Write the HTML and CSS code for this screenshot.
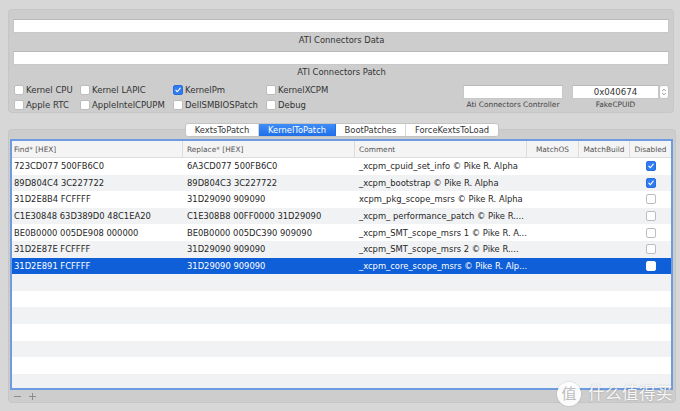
FILE: index.html
```html
<!DOCTYPE html>
<html>
<head>
<meta charset="utf-8">
<link rel="stylesheet" href="styles.css">
</head>
<body>
<div class="window">
  <div class="group">
    <div class="field wide"></div>
    <div class="caption">ATI Connectors Data</div>
    <div class="field wide"></div>
    <div class="caption">ATI Connectors Patch</div>
    <div class="bottom">
      <div class="checks">
        <label class="chk"><span class="box"></span>Kernel CPU</label>
        <label class="chk"><span class="box"></span>Kernel LAPIC</label>
        <label class="chk"><span class="box on"><svg viewBox="0 0 10 10"><path d="M2.3 5.2 L4.2 7.2 L7.8 2.6" fill="none" stroke="#fff" stroke-width="1.4" stroke-linecap="round" stroke-linejoin="round"/></svg></span>KernelPm</label>
        <label class="chk"><span class="box"></span>KernelXCPM</label>
        <label class="chk"><span class="box"></span>Apple RTC</label>
        <label class="chk"><span class="box"></span>AppleIntelCPUPM</label>
        <label class="chk"><span class="box"></span>DellSMBIOSPatch</label>
        <label class="chk"><span class="box"></span>Debug</label>
      </div>
      <div class="rfields">
        <div class="rf">
          <div class="field ctrl"></div>
          <div class="smallcap">Ati Connectors Controller</div>
        </div>
        <div class="rf">
          <div class="spinrow">
            <div class="field cpuid">0x040674</div>
            <div class="stepper"><svg viewBox="0 0 10 14"><path d="M3 5.5 L5 3.5 L7 5.5 M3 8.5 L5 10.5 L7 8.5" fill="none" stroke="#777" stroke-width="0.9" stroke-linecap="round" stroke-linejoin="round"/></svg></div>
          </div>
          <div class="smallcap cpucap">FakeCPUID</div>
        </div>
      </div>
    </div>
  </div>

  <div class="tabs">
    <div class="tab">KextsToPatch</div>
    <div class="tab active">KernelToPatch</div>
    <div class="tab">BootPatches</div>
    <div class="tab">ForceKextsToLoad</div>
  </div>
  <div class="tabbox">
    <div class="table">
      <div class="row head">
        <div class="c">Find* [HEX]</div>
        <div class="c">Replace* [HEX]</div>
        <div class="c">Comment</div>
        <div class="c ctr">MatchOS</div>
        <div class="c ctr">MatchBuild</div>
        <div class="c ctr">Disabled</div>
      </div>
      <div class="row">
        <div class="c first">723CD077 500FB6C0</div><div class="c">6A3CD077 500FB6C0</div><div class="c">_xcpm_cpuid_set_info © Pike R. Alpha</div><div class="c"></div><div class="c"></div>
        <div class="c ctr"><span class="box on"><svg viewBox="0 0 10 10"><path d="M2.3 5.2 L4.2 7.2 L7.8 2.6" fill="none" stroke="#fff" stroke-width="1.4" stroke-linecap="round" stroke-linejoin="round"/></svg></span></div>
      </div>
      <div class="row alt">
        <div class="c first">89D804C4 3C227722</div><div class="c">89D804C3 3C227722</div><div class="c">_xcpm_bootstrap © Pike R. Alpha</div><div class="c"></div><div class="c"></div>
        <div class="c ctr"><span class="box on"><svg viewBox="0 0 10 10"><path d="M2.3 5.2 L4.2 7.2 L7.8 2.6" fill="none" stroke="#fff" stroke-width="1.4" stroke-linecap="round" stroke-linejoin="round"/></svg></span></div>
      </div>
      <div class="row">
        <div class="c first">31D2E8B4 FCFFFF</div><div class="c">31D29090 909090</div><div class="c">xcpm_pkg_scope_msrs © Pike R. Alpha</div><div class="c"></div><div class="c"></div>
        <div class="c ctr"><span class="box"></span></div>
      </div>
      <div class="row alt">
        <div class="c first">C1E30848 63D389D0 48C1EA20</div><div class="c">C1E308B8 00FF0000 31D29090</div><div class="c">_xcpm_ performance_patch © Pike R....</div><div class="c"></div><div class="c"></div>
        <div class="c ctr"><span class="box"></span></div>
      </div>
      <div class="row">
        <div class="c first">BE0B0000 005DE908 000000</div><div class="c">BE0B0000 005DC390 909090</div><div class="c">_xcpm_SMT_scope_msrs 1 © Pike R. A...</div><div class="c"></div><div class="c"></div>
        <div class="c ctr"><span class="box"></span></div>
      </div>
      <div class="row alt">
        <div class="c first">31D2E87E FCFFFF</div><div class="c">31D29090 909090</div><div class="c">_xcpm_SMT_scope_msrs 2 © Pike R....</div><div class="c"></div><div class="c"></div>
        <div class="c ctr"><span class="box"></span></div>
      </div>
      <div class="row sel">
        <div class="c first">31D2E891 FCFFFF</div><div class="c">31D29090 909090</div><div class="c">_xcpm_core_scope_msrs © Pike R. Alp...</div><div class="c"></div><div class="c"></div>
        <div class="c ctr"><span class="box"></span></div>
      </div>
      <div class="row alt"></div>
      <div class="row"></div>
      <div class="row alt"></div>
      <div class="row"></div>
      <div class="row alt"></div>
      <div class="row"></div>
      <div class="row alt"></div>
    </div>
    <div class="pm"><span class="minus"></span><span class="plus"></span></div>
  </div>
  <div class="watermark"><span class="wm-circle">值</span><span class="wm-text">什么值得买</span></div>
</div>
</body>
</html>
```

FILE: styles.css
```css
html, body {
  margin: 0;
  padding: 0;
  background: #d7d7d7;
}
body {
  font-family: "DejaVu Sans", "Noto Sans CJK SC", sans-serif;
  color: #333;
  width: 680px;
  height: 411px;
  overflow: hidden;
}
.window {
  position: relative;
  padding: 9px 0 0 8px;
  height: 402px;
}
.group {
  width: 657px;
  height: 93px;
  background: #cdcdcd;
  border: 1px solid #c6c6c6;
  border-radius: 4px;
  padding: 9px 3px 0 4px;
}
.field {
  background: #fff;
  border: 1px solid #c8c8c8;
  border-top-color: #b9b9b9;
  box-sizing: border-box;
  height: 14px;
}
.field.wide {
  width: 656px;
}
.caption {
  height: 18px;
  box-sizing: border-box;
  padding-top: 1px;
  line-height: 13px;
  text-align: center;
  font-size: 8.4px;
  color: #333;
}
.bottom {
  display: flex;
  margin-top: -4px;
}
.checks {
  display: grid;
  grid-template-columns: 66px 93px 93px 93px;
  grid-auto-rows: 15px;
  padding-top: 3px;
  margin-left: 1px;
}
.chk {
  display: flex;
  align-items: center;
  font-size: 8.5px;
  color: #333;
  white-space: nowrap;
}
.box {
  display: inline-block;
  width: 10px;
  height: 10px;
  box-sizing: border-box;
  background: #fff;
  border: 1px solid #bdbdbd;
  border-radius: 2px;
  margin-right: 2px;
  flex: none;
  vertical-align: middle;
}
.box.on {
  background: #2f7bf2;
  border-color: #2a6fde;
}
.box svg {
  display: block;
  width: 8px;
  height: 8px;
}
.rfields {
  display: flex;
  margin-left: auto;
  gap: 9px;
  padding-top: 6px;
  padding-right: 1px;
}
.rf {
  display: flex;
  flex-direction: column;
}
.field.ctrl {
  width: 100px;
}
.spinrow {
  display: flex;
}
.field.cpuid {
  width: 87px;
  font-size: 8.6px;
  line-height: 12px;
  text-align: center;
  color: #333;
}
.stepper {
  width: 10px;
  height: 14px;
  box-sizing: border-box;
  background: #fff;
  border: 1px solid #c4c4c4;
  border-radius: 3px;
}
.stepper svg {
  display: block;
  width: 8px;
  height: 12px;
}
.smallcap {
  font-size: 7.4px;
  color: #444;
  text-align: center;
  line-height: 12px;
}
.cpucap {
  margin-right: 10px;
}
.tabs {
  display: flex;
  margin: 10px 0 -8px 177px;
  position: relative;
  z-index: 1;
  height: 12px;
  width: 312px;
  background: #fff;
  border: 1px solid #c3c3c3;
  border-radius: 3px;
  overflow: hidden;
}
.tab {
  font-size: 8.4px;
  line-height: 12px;
  color: #333;
  text-align: center;
  border-right: 1px solid #d6d6d6;
}
.tab:nth-child(1) { width: 72px; }
.tab:nth-child(2) { width: 76px; }
.tab:nth-child(3) { width: 69px; }
.tab:nth-child(4) { width: 92px; border-right: none; }
.tab.active {
  background: linear-gradient(#3f8df7, #1f6fe8);
  color: #fff;
  border-right-color: #1f6fe8;
}
.tabbox {
  width: 665px;
  height: 263px;
  background: #cdcdcd;
  border: 1px solid #c6c6c6;
  border-radius: 4px;
  padding: 9px 0 0 1px;
}
.table {
  width: 659px;
  height: 247px;
  border: 2px solid #6e9be2;
  background: #fff;
  overflow: hidden;
}
.row {
  display: grid;
  grid-template-columns: 171px 172px 172px 52px 51px 41px;
  height: 16.6px;
  font-size: 8.4px;
  color: #262626;
  background: #fff;
}
.row.alt {
  background: #f1f2f4;
}
.row.head {
  height: 17px;
  background: #f4f4f4;
  border-bottom: 1px solid #dedede;
  box-sizing: border-box;
  color: #555;
  font-size: 7.4px;
}
.row.head .c {
  border-right: 1px solid #dcdcdc;
  padding-left: 4px;
}
.row.head .c:first-child {
  padding-left: 2px;
}
.row.head .c:last-child {
  border-right: none;
}
.c {
  display: flex;
  align-items: center;
  padding-left: 4px;
  white-space: nowrap;
  overflow: hidden;
}
.c.first {
  padding-left: 2px;
}
.c.ctr, .row.head .c.ctr {
  justify-content: center;
  padding-left: 0;
}
.row .c .box {
  margin: 0;
}
.row.sel {
  background: #0f5fd8;
  color: #fff;
}
.row.sel .box {
  border-color: #fff;
}
.pm {
  display: flex;
  align-items: center;
  height: 12px;
  padding-left: 4px;
  gap: 8px;
}
.minus, .plus {
  position: relative;
  width: 7px;
  height: 7px;
}
.minus::before, .plus::before, .plus::after {
  content: "";
  position: absolute;
  background: #8a8a8a;
}
.minus::before, .plus::before {
  left: 0;
  top: 3px;
  width: 7px;
  height: 1px;
}
.plus::after {
  left: 3px;
  top: 0;
  width: 1px;
  height: 7px;
}
.watermark {
  position: absolute;
  right: 7px;
  bottom: 5px;
  display: flex;
  align-items: center;
  gap: 7px;
  color: rgba(255, 255, 255, 0.92);
  text-shadow: 0 0 2px rgba(0, 0, 0, 0.25);
}
.wm-circle {
  width: 24px;
  height: 24px;
  border-radius: 50%;
  background: rgba(255, 255, 255, 0.92);
  color: #bdbdbd;
  font-size: 15px;
  line-height: 24px;
  text-align: center;
  text-shadow: none;
  box-shadow: 0 0 2px rgba(0, 0, 0, 0.2);
}
.wm-text {
  font-size: 16.5px;
  letter-spacing: 0.5px;
  line-height: 24px;
}
```
